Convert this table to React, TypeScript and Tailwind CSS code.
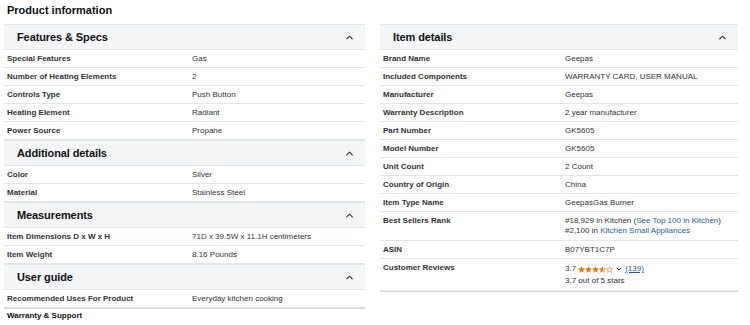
import { ChevronUp, ChevronDown } from 'lucide-react';

type Row = { label: string; value: React.ReactNode; tall?: boolean };

function SectionHeader({ title }: { title: string }) {
  return (
    <div className="flex items-center justify-between h-[26px] bg-[#f3f5f6] border-t border-b border-[#e3e6e6] pl-[13px] pr-[10px]">
      <span className="text-[11px] font-bold text-[#0f1111] tracking-[-0.1px]">{title}</span>
      <ChevronUp className="w-[11px] h-[11px] text-[#333]" strokeWidth={2.5} />
    </div>
  );
}

function Rows({ rows, labelWidth }: { rows: Row[]; labelWidth: 'left' | 'right' }) {
  const cols = labelWidth === 'left' ? 'grid-cols-[185px_1fr]' : 'grid-cols-[182px_1fr]';
  return (
    <div>
      {rows.map((r, i) => (
        <div
          key={i}
          className={`grid ${cols} border-b border-[#e3e6e6] pl-[3px] ${r.tall ? 'items-start pt-[4px] pb-[4px]' : 'h-[18px] items-center'}`}
        >
          <span className="text-[8px] font-bold text-[#333] leading-[10px]">{r.label}</span>
          <span className="text-[8px] text-[#333] leading-[10px]">{r.value}</span>
        </div>
      ))}
    </div>
  );
}

function Star({ fill }: { fill: 'full' | 'half' | 'empty' }) {
  const d = 'M12 2l2.9 6.9 7.1.6-5.4 4.7 1.7 7.3L12 17.8 5.7 21.5l1.7-7.3L2 9.5l7.1-.6z';
  return (
    <svg viewBox="0 0 24 24" className="w-[7px] h-[7px]">
      <defs>
        <linearGradient id="half">
          <stop offset="50%" stopColor="#de7921" />
          <stop offset="50%" stopColor="#fff" />
        </linearGradient>
      </defs>
      <path
        d={d}
        fill={fill === 'full' ? '#de7921' : fill === 'half' ? 'url(#half)' : '#fff'}
        stroke="#de7921"
        strokeWidth={2}
      />
    </svg>
  );
}

const link = 'text-[#2162a1]';

export default function App() {
  const features: Row[] = [
    { label: 'Special Features', value: 'Gas' },
    { label: 'Number of Heating Elements', value: '2' },
    { label: 'Controls Type', value: 'Push Button' },
    { label: 'Heating Element', value: 'Radiant' },
    { label: 'Power Source', value: 'Propane' },
  ];
  const additional: Row[] = [
    { label: 'Color', value: 'Silver' },
    { label: 'Material', value: 'Stainless Steel' },
  ];
  const measurements: Row[] = [
    { label: 'Item Dimensions D x W x H', value: '71D x 39.5W x 11.1H centimeters' },
    { label: 'Item Weight', value: '8.16 Pounds' },
  ];
  const guide: Row[] = [{ label: 'Recommended Uses For Product', value: 'Everyday kitchen cooking' }];

  const item: Row[] = [
    { label: 'Brand Name', value: 'Geepas' },
    { label: 'Included Components', value: 'WARRANTY CARD, USER MANUAL' },
    { label: 'Manufacturer', value: 'Geepas' },
    { label: 'Warranty Description', value: '2 year manufacturer' },
    { label: 'Part Number', value: 'GK5605' },
    { label: 'Model Number', value: 'GK5605' },
    { label: 'Unit Count', value: '2 Count' },
    { label: 'Country of Origin', value: 'China' },
    { label: 'Item Type Name', value: 'GeepasGas Burner' },
    {
      label: 'Best Sellers Rank',
      tall: true,
      value: (
        <>
          <span className="block">
            #18,929 in Kitchen (<span className={link}>See Top 100 in Kitchen</span>)
          </span>
          <span className="block">
            #2,100 in <span className={link}>Kitchen Small Appliances</span>
          </span>
        </>
      ),
    },
    { label: 'ASIN', value: 'B07YBT1C7P' },
    {
      label: 'Customer Reviews',
      tall: true,
      value: (
        <>
          <span className="flex items-center gap-[2px] h-[12px]">
            <span>3.7</span>
            <span className="flex">
              <Star fill="full" />
              <Star fill="full" />
              <Star fill="full" />
              <Star fill="half" />
              <Star fill="empty" />
            </span>
            <ChevronDown className="w-[8px] h-[8px] text-[#333]" strokeWidth={3} />
            <span className={`${link} underline`}>(139)</span>
          </span>
          <span className="block leading-[11px]">3.7 out of 5 stars</span>
        </>
      ),
    },
  ];

  return (
    <div className="w-[750px] h-[325px] bg-white overflow-hidden font-['Liberation_Sans',Arial,sans-serif]">
      <div className="px-[7px] pt-[2px] h-[24px] text-[11px] font-bold text-[#0f1111]">Product information</div>
      <div className="grid grid-cols-[361px_358px] gap-[15px] pl-[4px]">
        <div>
          <SectionHeader title="Features & Specs" />
          <Rows rows={features} labelWidth="left" />
          <SectionHeader title="Additional details" />
          <Rows rows={additional} labelWidth="left" />
          <SectionHeader title="Measurements" />
          <Rows rows={measurements} labelWidth="left" />
          <SectionHeader title="User guide" />
          <div className="border-b border-[#d5d9d9]">
            <Rows rows={guide} labelWidth="left" />
          </div>
          <div className="pl-[3px] pt-[1px] text-[8px] font-bold text-[#0f1111]">Warranty &amp; Support</div>
        </div>
        <div>
          <SectionHeader title="Item details" />
          <div className="border-b border-[#d5d9d9]">
            <Rows rows={item} labelWidth="right" />
          </div>
        </div>
      </div>
    </div>
  );
}
